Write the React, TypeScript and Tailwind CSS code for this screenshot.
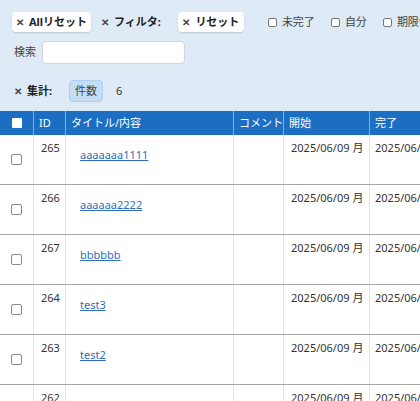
import React from 'react';

const rows = [
  { id: 265, title: 'aaaaaaa1111' },
  { id: 266, title: 'aaaaaa2222' },
  { id: 267, title: 'bbbbbb' },
  { id: 264, title: 'test3' },
  { id: 263, title: 'test2' },
  { id: 262, title: 'test1' },
];

function Cb({ label }: { label: string }) {
  return (
    <label className="shrink-0 flex items-center gap-[5px] text-[#444]">
      <span className="w-[9px] h-[9px] border border-[#777] rounded-[2px] bg-white" />
      <span>{label}</span>
    </label>
  );
}

export default function App() {
  return (
    <div className="w-[420px] h-[401px] overflow-hidden bg-white text-[11px] text-[#333] font-['Noto_Sans','Noto_Sans_CJK_JP',sans-serif]">
      <div className="bg-[#deeaf6] h-[111px] pt-[12px] pl-[12px] overflow-hidden">
        <div className="flex items-center h-[20px] whitespace-nowrap w-[520px]">
          <button className="shrink-0 w-[79px] h-[20px] flex items-center justify-center gap-[5px] bg-white rounded-[4px] shadow-[0_1px_2px_rgba(0,0,0,0.15)] font-bold text-[#222]">
            <span className="text-[10px] text-[#444]">✕</span>
            <span>Allリセット</span>
          </button>
          <div className="shrink-0 ml-[10px] flex items-center gap-[5px] font-bold text-[#222]">
            <span className="text-[10px] text-[#444]">✕</span>
            <span>フィルタ:</span>
          </div>
          <button className="shrink-0 ml-[17px] w-[66px] h-[20px] flex items-center justify-center gap-[5px] bg-white rounded-[4px] shadow-[0_1px_2px_rgba(0,0,0,0.15)] font-bold text-[#222]">
            <span className="text-[10px] text-[#444]">✕</span>
            <span>リセット</span>
          </button>
          <div className="shrink-0 ml-[24px] flex items-center gap-[16px]">
            <Cb label="未完了" />
            <Cb label="自分" />
            <Cb label="期限切れ" />
          </div>
        </div>
        <div className="flex items-center mt-[9px] h-[23px]">
          <span className="ml-[2px] text-[#444]">検索</span>
          <div className="ml-[6px] w-[143px] h-[23px] bg-white border border-[#cfd6de] rounded-[4px]" />
        </div>
        <div className="flex items-center mt-[16px] h-[22px]">
          <div className="ml-[2px] flex items-center gap-[5px] font-bold text-[#222]">
            <span className="text-[10px] text-[#444]">✕</span>
            <span>集計:</span>
          </div>
          <div className="ml-[17px] w-[34px] h-[22px] flex items-center justify-center bg-[#c2ddf4] border border-[#acd0ef] rounded-[4px] text-[#444]">件数</div>
          <span className="ml-[13px]">6</span>
        </div>
      </div>
      <div className="w-[560px]">
        <div className="flex h-[24px] bg-[#1b6ec2] text-white">
          <div className="w-[34px] border-r border-[#7fb2e3] flex items-center justify-center">
            <span className="w-[10px] h-[10px] bg-white rounded-[1px]" />
          </div>
          <div className="w-[32px] border-r border-[#7fb2e3] flex items-center pl-[5px]">ID</div>
          <div className="w-[168px] border-r border-[#7fb2e3] flex items-center pl-[5px]">タイトル/内容</div>
          <div className="w-[50px] border-r border-[#7fb2e3] flex items-center pl-[5px]">コメント</div>
          <div className="w-[86px] border-r border-[#7fb2e3] flex items-center pl-[5px]">開始</div>
          <div className="w-[86px] border-r border-[#7fb2e3] flex items-center pl-[5px]">完了</div>
          <div className="w-[80px] flex items-center pl-[5px]">期限</div>
        </div>
        {rows.map((r) => (
          <div key={r.id} className="flex h-[50px] border-b border-[#a6a6a6]">
            <div className="w-[34px] border-r border-[#e3e3e3] flex items-center justify-center">
              <span className="w-[11px] h-[11px] border border-[#8a8a8a] rounded-[2px] bg-white" />
            </div>
            <div className="w-[32px] border-r border-[#e3e3e3] pl-[7px] pt-[5px]">{r.id}</div>
            <div className="w-[168px] border-r border-[#e3e3e3] pl-[14px] pt-[12px]">
              <a className="text-[#2f6db8] underline">{r.title}</a>
            </div>
            <div className="w-[50px] border-r border-[#e3e3e3]" />
            <div className="w-[86px] border-r border-[#e3e3e3] pl-[7px] pt-[5px] whitespace-nowrap">2025/06/09 月</div>
            <div className="w-[86px] border-r border-[#e3e3e3] pl-[5px] pt-[5px] whitespace-nowrap">2025/06/09 月</div>
            <div className="w-[80px]" />
          </div>
        ))}
      </div>
    </div>
  );
}
